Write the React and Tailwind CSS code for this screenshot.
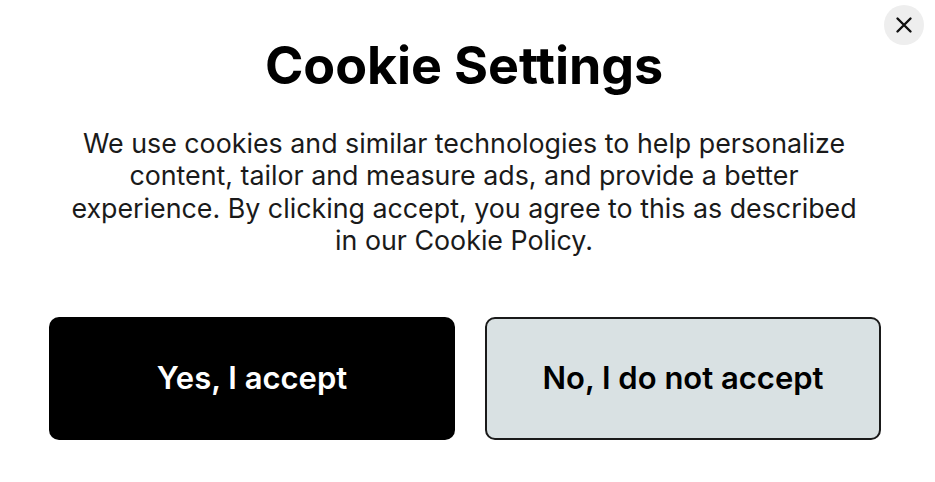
import React from "react";

const App = () => {
  return (
    <div className="relative w-[935px] h-[482px] bg-white font-['Inter',sans-serif] text-black">
      {/* close */}
      <button className="absolute right-[11px] top-[5px] w-[40px] h-[40px] rounded-full bg-[#eeeeee] flex items-center justify-center">
        <svg width="20" height="20" viewBox="0 0 20 20" fill="none" stroke="#111" strokeWidth="2.4" strokeLinecap="round">
          <path d="M3.5 3.5L16.5 16.5M16.5 3.5L3.5 16.5" />
        </svg>
      </button>

      <div className="flex flex-col items-center pt-[36px] pr-[7px]">
        <h1 className="text-[52px] leading-[60px] font-bold tracking-[-0.1px]">Cookie Settings</h1>
        <p className="mt-[31px] w-[805px] text-center text-[26.8px] leading-[32.4px] text-[#1a1a1a]">
          We use cookies and similar technologies to help personalize content, tailor and measure ads, and provide a better experience. By clicking accept, you agree to this as described in our Cookie Policy.
        </p>
      </div>

      <div className="flex gap-[30px] pl-[49px] mt-[60px]">
        <button className="w-[406px] h-[123px] rounded-[10px] bg-black text-white text-[31px] font-semibold">
          Yes, I accept
        </button>
        <button className="w-[396px] h-[123px] rounded-[10px] bg-[#d9e1e3] border-2 border-[#1a1a1a] text-black text-[31px] font-semibold">
          No, I do not accept
        </button>
      </div>
    </div>
  );
};

export default App;
